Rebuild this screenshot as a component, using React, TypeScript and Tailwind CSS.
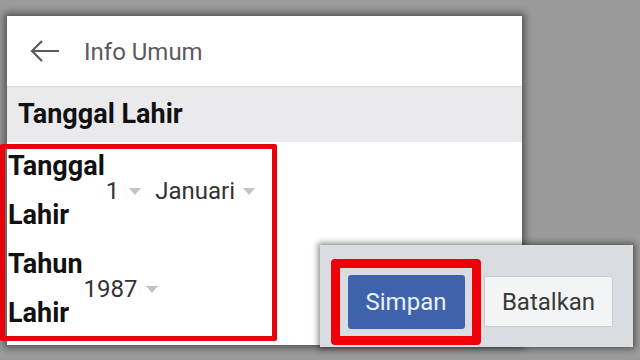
import React from "react";

const Tri = () => (
  <svg width="12" height="7" viewBox="0 0 12 7" className="shrink-0">
    <polygon points="0,0 12,0 6,7" fill="#c2c2c2" />
  </svg>
);

function Select({ value, gap = "gap-[10px]" }: { value: string; gap?: string }) {
  return (
    <div className={`flex items-center ${gap} text-[24px] leading-[28px] text-[#333]`}>
      <span>{value}</span>
      <Tri />
    </div>
  );
}

export default function App() {
  return (
    <div
      className="relative w-[640px] h-[360px] overflow-hidden bg-[#9a9a9a] pl-[7px] pt-[16px]"
      style={{ fontFamily: "Roboto, 'Liberation Sans', sans-serif" }}
    >
      <div className="w-[515px] h-[329px] bg-white shadow-[0_0_7px_3px_rgba(0,0,0,0.45)] flex flex-col">
        <div className="h-[71px] flex items-center border-b border-[#dcdcdc] shrink-0">
          <svg width="30" height="22" viewBox="0 0 30 22" className="ml-[23px]">
            <path d="M2 11 H29 M12 1 L2 11 L12 21" stroke="#5a5a5a" strokeWidth="2.2" fill="none" />
          </svg>
          <span className="ml-[24px] mt-[2px] text-[24px] text-[#5b5b5b]">Info Umum</span>
        </div>
        <div className="h-[55px] bg-[#eaeaed] flex items-center pl-[11px] shrink-0">
          <span className="text-[27px] font-bold text-[#111]">Tanggal Lahir</span>
        </div>
        <div className="flex flex-col pl-[1px]">
          <div className="flex items-center">
            <div className="w-min text-[27px] leading-[49px] font-bold text-[#111]">Tanggal Lahir</div>
            <div className="flex items-center gap-[14px] ml-[1px]">
              <Select value="1" />
              <Select value="Januari" gap="gap-[8px]" />
            </div>
          </div>
          <div className="flex items-center">
            <div className="w-min text-[27px] leading-[49px] font-bold text-[#111]">Tahun Lahir</div>
            <div className="ml-[1px]">
              <Select value="1987" gap="gap-[8px]" />
            </div>
          </div>
        </div>
      </div>

      <div className="absolute left-0 top-[144px] w-[277px] h-[197px] border-[5px] border-[#e8000a] rounded-[2px] pointer-events-none" />

      <div className="absolute left-[320px] top-[245px] w-[313px] h-[102px] bg-[#d9dce0] shadow-[0_0_6px_2px_rgba(0,0,0,0.45)] flex items-start pl-[11px] pt-[14px]">
        <div className="w-[150px] h-[86px] border-[9px] border-[#ee0008] rounded-[4px] flex items-center justify-center">
          <div className="w-[117px] h-[54px] bg-[#3f62ad] rounded-[3px] flex items-center justify-center text-[24px] text-[#eaf1ff]">
            Simpan
          </div>
        </div>
        <div className="ml-[3px] mt-[17px] w-[129px] h-[51px] bg-[#f3f4f5] border border-[#c9cbce] rounded-[2px] flex items-center justify-center text-[24px] text-[#3a3a3a]">
          Batalkan
        </div>
      </div>
    </div>
  );
}
